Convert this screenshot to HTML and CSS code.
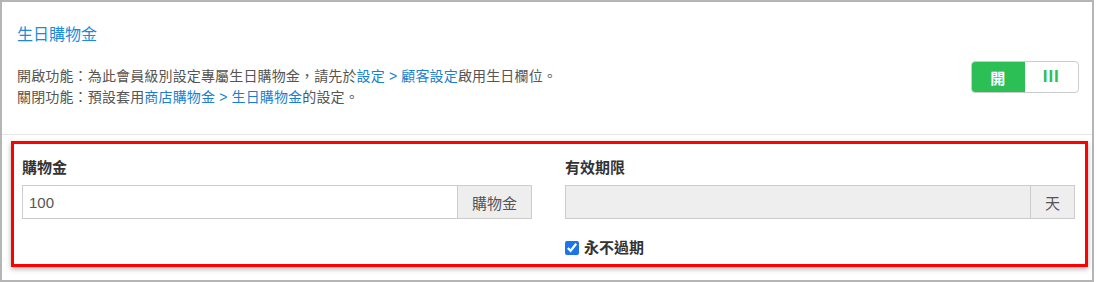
FILE: index.html
```html
<!DOCTYPE html>
<html lang="zh-Hant">

<head>
    <meta charset="UTF-8">
    <meta name="viewport" content="width=device-width, initial-scale=1.0">
    <title>生日購物金</title>
    <link rel="stylesheet" href="styles.css">
</head>

<body>
    <div class="panel">
        <!-- heading and on/off switch -->
        <div class="panel-head">
            <h3 class="panel-title">生日購物金</h3>
            <div class="head-row">
                <div class="desc">
                    <p>開啟功能：為此會員級別設定專屬生日購物金，請先於<a href="#">設定 &gt; 顧客設定</a>啟用生日欄位。</p>
                    <p>關閉功能：預設套用<a href="#">商店購物金 &gt; 生日購物金</a>的設定。</p>
                </div>
                <div class="switch">
                    <span class="switch-on">開</span>
                    <span class="switch-off">III</span>
                </div>
            </div>
        </div>

        <!-- settings -->
        <div class="panel-body">
            <div class="field">
                <label class="field-label">購物金</label>
                <div class="input-group">
                    <input type="text" value="100">
                    <span class="addon">購物金</span>
                </div>
            </div>
            <div class="field">
                <label class="field-label">有效期限</label>
                <div class="input-group">
                    <input type="text" disabled>
                    <span class="addon">天</span>
                </div>
                <label class="check">
                    <input type="checkbox" checked>
                    <span>永不過期</span>
                </label>
            </div>
        </div>
    </div>
</body>

</html>
```

FILE: styles.css
```css
body {
    font-family: "Liberation Sans", "Noto Sans CJK TC", sans-serif;
    background-color: #fff;
    margin: 0;
    padding: 0;
}

.panel {
    width: 1090px;
    height: 278px;
    border: 2px solid #b5b5b5;
    background-color: #fff;
}

.panel-head {
    padding: 22px 13px 26px 15px;
    border-bottom: 1px solid #e6e6e6;
}

.panel-title {
    margin: 0;
    font-size: 16px;
    line-height: 22px;
    font-weight: normal;
    color: #1a8cdb;
}

.head-row {
    display: flex;
    justify-content: space-between;
    align-items: flex-start;
    margin-top: 15px;
}

.desc {
    padding-top: 5px;
}

.desc p {
    margin: 0;
    font-size: 14px;
    line-height: 21px;
    letter-spacing: 0.15px;
    color: #555;
}

.desc a {
    color: #1a7fd0;
    text-decoration: none;
}

.switch {
    display: flex;
    width: 108px;
    height: 32px;
    box-sizing: border-box;
    border: 1px solid #ccc;
    border-radius: 4px;
    overflow: hidden;
}

.switch span {
    flex: 1;
    display: flex;
    align-items: center;
    justify-content: center;
    font-size: 15px;
    font-weight: bold;
}

.switch-on {
    background-color: #2bbf56;
    color: #fff;
    margin: -1px 0 -1px -1px;
}

.switch-off {
    color: #2bbf56;
    font-size: 17px !important;
    letter-spacing: 1px;
}

/* annotated settings box */

.panel-body {
    display: grid;
    grid-template-columns: 1fr 1fr;
    column-gap: 33px;
    margin: 6px 4px 0 9px;
    padding: 14px 10px 6px 8px;
    border: 3px solid #f00;
    box-shadow: 0 2px 5px rgba(0, 0, 0, 0.3);
}

.field-label {
    display: block;
    font-size: 15px;
    line-height: 20px;
    font-weight: bold;
    color: #333;
    margin-bottom: 7px;
}

.input-group {
    display: flex;
    height: 34px;
}

.input-group input {
    flex: 1;
    min-width: 0;
    box-sizing: border-box;
    height: 34px;
    margin: 0;
    padding: 0 6px;
    border: 1px solid #ccc;
    border-right: none;
    font-family: inherit;
    font-size: 15px;
    color: #555;
    outline: none;
}

.input-group input:disabled {
    background-color: #eee;
}

.addon {
    display: flex;
    align-items: center;
    padding: 0 14px;
    border: 1px solid #ccc;
    background-color: #eee;
    font-size: 15px;
    color: #555;
}

.check {
    display: flex;
    align-items: center;
    margin-top: 19px;
    font-size: 15px;
    line-height: 20px;
    font-weight: bold;
    color: #333;
}

.check input {
    width: 14px;
    height: 14px;
    margin: 0 5px 0 0;
    accent-color: #1b74e8;
}
```
